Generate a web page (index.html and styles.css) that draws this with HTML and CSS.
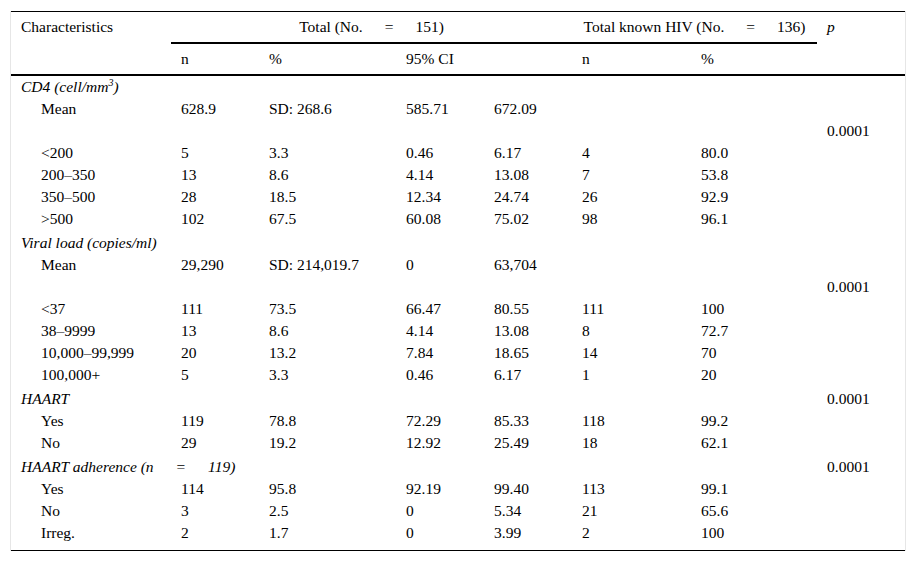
FILE: index.html
```html
<!DOCTYPE html>
<html>
<head>
<meta charset="utf-8">
<link rel="stylesheet" href="styles.css">
</head>
<body>
<div class="frame">
<table class="data">
  <colgroup>
    <col class="c1"><col class="c2"><col class="c3"><col class="c4"><col class="c5"><col class="c6"><col class="c7"><col class="c8">
  </colgroup>
  <thead>
    <tr class="h1">
      <th rowspan="2" class="left">Characteristics</th>
      <th colspan="4" class="group">Total (No.<span class="eq">=</span>151)</th>
      <th colspan="2" class="group">Total known HIV (No.<span class="eq">=</span>136)</th>
      <th rowspan="2"><i>p</i></th>
    </tr>
    <tr class="h2">
      <th>n</th><th>%</th><th colspan="2">95% CI</th><th>n</th><th>%</th>
    </tr>
  </thead>
  <tbody>
    <tr class="sec first"><td colspan="8"><i>CD4 (cell/mm<sup>3</sup>)</i></td></tr>
    <tr><td class="sub">Mean</td><td>628.9</td><td>SD: 268.6</td><td>585.71</td><td>672.09</td><td></td><td></td><td></td></tr>
    <tr><td></td><td></td><td></td><td></td><td></td><td></td><td></td><td>0.0001</td></tr>
    <tr><td class="sub">&lt;200</td><td>5</td><td>3.3</td><td>0.46</td><td>6.17</td><td>4</td><td>80.0</td><td></td></tr>
    <tr><td class="sub">200–350</td><td>13</td><td>8.6</td><td>4.14</td><td>13.08</td><td>7</td><td>53.8</td><td></td></tr>
    <tr><td class="sub">350–500</td><td>28</td><td>18.5</td><td>12.34</td><td>24.74</td><td>26</td><td>92.9</td><td></td></tr>
    <tr><td class="sub">&gt;500</td><td>102</td><td>67.5</td><td>60.08</td><td>75.02</td><td>98</td><td>96.1</td><td></td></tr>
    <tr class="sec"><td colspan="8"><i>Viral load (copies/ml)</i></td></tr>
    <tr><td class="sub">Mean</td><td>29,290</td><td>SD: 214,019.7</td><td>0</td><td>63,704</td><td></td><td></td><td></td></tr>
    <tr><td></td><td></td><td></td><td></td><td></td><td></td><td></td><td>0.0001</td></tr>
    <tr><td class="sub">&lt;37</td><td>111</td><td>73.5</td><td>66.47</td><td>80.55</td><td>111</td><td>100</td><td></td></tr>
    <tr><td class="sub">38–9999</td><td>13</td><td>8.6</td><td>4.14</td><td>13.08</td><td>8</td><td>72.7</td><td></td></tr>
    <tr><td class="sub">10,000–99,999</td><td>20</td><td>13.2</td><td>7.84</td><td>18.65</td><td>14</td><td>70</td><td></td></tr>
    <tr><td class="sub">100,000+</td><td>5</td><td>3.3</td><td>0.46</td><td>6.17</td><td>1</td><td>20</td><td></td></tr>
    <tr class="sec"><td colspan="7"><i>HAART</i></td><td>0.0001</td></tr>
    <tr><td class="sub">Yes</td><td>119</td><td>78.8</td><td>72.29</td><td>85.33</td><td>118</td><td>99.2</td><td></td></tr>
    <tr><td class="sub">No</td><td>29</td><td>19.2</td><td>12.92</td><td>25.49</td><td>18</td><td>62.1</td><td></td></tr>
    <tr class="sec"><td colspan="7"><i>HAART adherence (n<span class="eq">=</span>119)</i></td><td>0.0001</td></tr>
    <tr><td class="sub">Yes</td><td>114</td><td>95.8</td><td>92.19</td><td>99.40</td><td>113</td><td>99.1</td><td></td></tr>
    <tr><td class="sub">No</td><td>3</td><td>2.5</td><td>0</td><td>5.34</td><td>21</td><td>65.6</td><td></td></tr>
    <tr class="last"><td class="sub">Irreg.</td><td>2</td><td>1.7</td><td>0</td><td>3.99</td><td>2</td><td>100</td><td></td></tr>
  </tbody>
</table>
</div>
</body>
</html>
```

FILE: styles.css
```css
html, body {
  margin: 0;
  padding: 0;
  background: #fff;
}
body {
  font-family: "Liberation Serif", "Times New Roman", Times, serif;
  font-size: 15.5px;
  color: #000;
}
.frame {
  margin: 11px 0 0 10px;
  width: 894px;
  border-left: 1px solid #e6e6e6;
  border-right: 1px solid #e6e6e6;
}
.data {
  width: 894px;
  border-collapse: collapse;
  table-layout: fixed;
  border-top: 1px solid #000;
  border-bottom: 1px solid #000;
}
.c1 { width: 160px; }
.c2 { width: 88px; }
.c3 { width: 137px; }
.c4 { width: 88px; }
.c5 { width: 88px; }
.c6 { width: 119px; }
.c7 { width: 126px; }
.c8 { width: 88px; }
th, td {
  padding: 0 0 0 10px;
  text-align: left;
  font-weight: normal;
  white-space: nowrap;
  line-height: 22px;
  vertical-align: top;
}
thead th {
  padding-top: 4px;
  padding-bottom: 4px;
}
thead .h1 th.group {
  text-align: center;
  padding-left: 0;
  border-bottom: 2px solid #000;
}
thead .h2 th {
  padding-top: 4px;
  padding-bottom: 4px;
  border-bottom: 2px solid #000;
}
thead .h1 th[rowspan] {
  border-bottom: 2px solid #000;
}
.eq {
  margin: 0 22px;
}
td.sub {
  padding-left: 30px;
}
tr.sec td {
  padding-top: 2px;
}
tr.sec.first td {
  padding-top: 0;
}
tr.last td {
  padding-bottom: 6px;
}
sup {
  font-size: 10px;
  line-height: 0;
  vertical-align: 6px;
}
```
